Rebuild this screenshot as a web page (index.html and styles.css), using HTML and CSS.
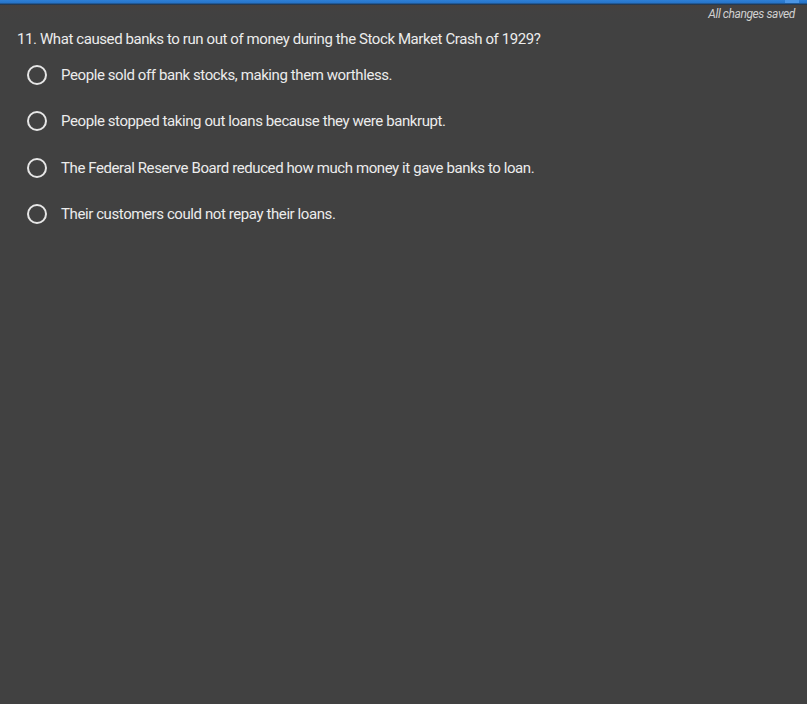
FILE: index.html
```html
<!DOCTYPE html>
<html>
<head>
<meta charset="utf-8">
<link rel="stylesheet" href="styles.css">
</head>
<body>
<div class="topbar"><span class="tab"></span></div>
<div class="status"><span class="saved">All changes saved</span></div>
<div class="question">
  <div class="prompt">11. What caused banks to run out of money during the Stock Market Crash of 1929?</div>
  <div class="options">
    <label class="option"><span class="radio"></span><span class="label">People sold off bank stocks, making them worthless.</span></label>
    <label class="option"><span class="radio"></span><span class="label">People stopped taking out loans because they were bankrupt.</span></label>
    <label class="option"><span class="radio"></span><span class="label">The Federal Reserve Board reduced how much money it gave banks to loan.</span></label>
    <label class="option"><span class="radio"></span><span class="label">Their customers could not repay their loans.</span></label>
  </div>
</div>
</body>
</html>
```
FILE: styles.css
```css
html, body {
  margin: 0;
  padding: 0;
  background: #414141;
  height: 100%;
}
body {
  font-family: Roboto, "Noto Sans", sans-serif;
  color: #ececec;
  overflow: hidden;
}
.topbar {
  height: 5px;
  background: linear-gradient(#2f7fd6 0, #2674c8 3px, #1d3f66 4px, #2a3440 5px);
  position: relative;
}
.tab {
  position: absolute;
  right: 8px;
  top: 0;
  width: 14px;
  height: 3px;
  background: #4a95e6;
}
.status {
  display: flex;
  justify-content: flex-end;
  padding: 1px 12px 0 0;
  height: 17px;
  background: linear-gradient(#45403e 0, #424141 6px, #414141 100%);
}
.saved {
  font-style: italic;
  font-size: 12px;
  letter-spacing: -0.41px;
  color: #d0d0d0;
  line-height: 16px;
}
.question {
  padding: 6px 0 0 17px;
}
.prompt {
  font-size: 15px;
  letter-spacing: -0.41px;
  line-height: 20px;
}
.options {
  display: flex;
  flex-direction: column;
  gap: 26.4px;
  margin-top: 16px;
  padding-left: 10px;
}
.option {
  display: flex;
  align-items: center;
  gap: 14px;
  height: 20px;
}
.radio {
  box-sizing: border-box;
  width: 20px;
  height: 20px;
  border: 2px solid #e6e6e6;
  border-radius: 50%;
  flex: none;
}
.label {
  font-size: 15px;
  letter-spacing: -0.41px;
  line-height: 20px;
}
```
